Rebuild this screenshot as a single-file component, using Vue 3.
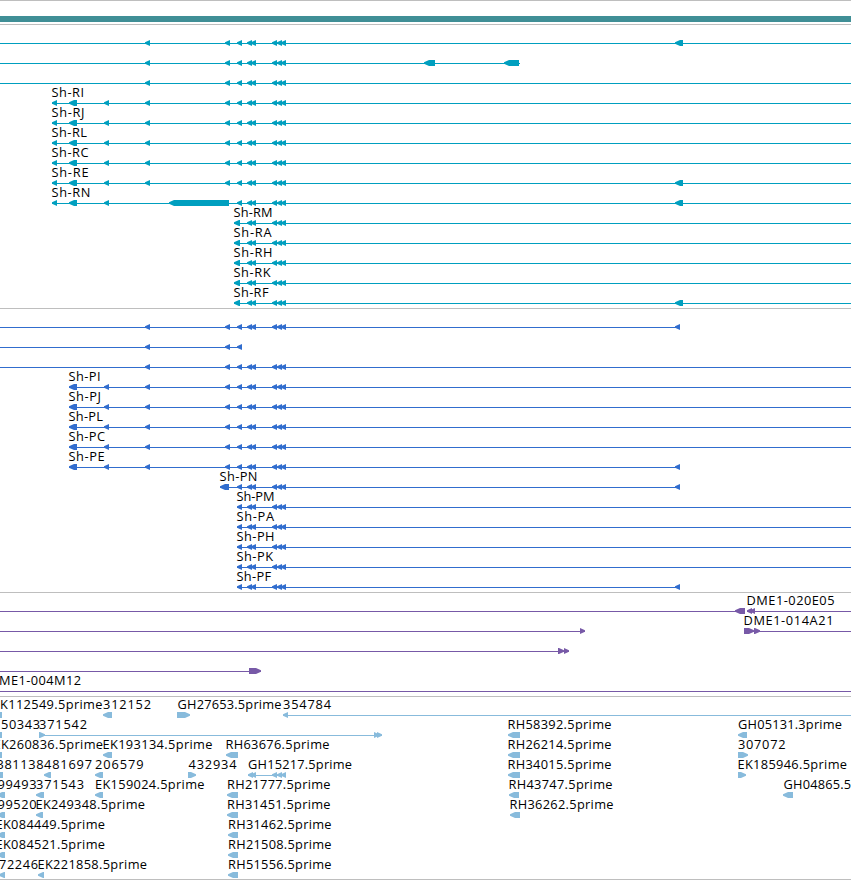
<template>
  <main class="browser">
    <div class="ruler">
      <div class="contig"></div>
    </div>
    <section
      v-for="panel in panels"
      :key="panel.name"
      class="panel"
      :class="panel.name"
    >
      <svg
        v-for="(row, i) in panel.rows"
        :key="i"
        class="row"
        width="851"
        height="20"
        viewBox="0 0 851 20"
      >
        <rect
          v-for="(line, n) in row.lines"
          :key="'l' + n"
          :x="line[0]"
          y="15"
          :width="line[1] - line[0]"
          height="1"
          shape-rendering="crispEdges"
        />
        <polygon
          v-for="(exon, n) in row.exons"
          :key="'e' + n"
          :points="arrow(exon)"
        />
        <text
          v-for="label in row.labels"
          :key="label[0]"
          :x="label[1] + 0.5"
          y="9"
          :textLength="label[2] - 1"
        >{{ label[0] }}</text>
      </svg>
    </section>
  </main>
</template>

<script setup>
const END = 851

// exon positions shared by most transcripts
const tail = [[272, 277], [277, 282], [281, 286]]
const pair = [[247, 252], [251, 256]]
const core = [[237, 242], ...pair, ...tail]
const common = [[145, 150], [225, 230], ...core]

// exon is [start, end], a third value of 1 makes it point to the right
const arrow = ([x1, x2, forward]) => {
  const head = Math.min(5, x2 - x1)
  if (forward) {
    return `${x1},12 ${x2 - head},12 ${x2},14.2 ${x2},15.8 ${x2 - head},18 ${x1},18`
  }
  return `${x2},12 ${x1 + head},12 ${x1},14.2 ${x1},15.8 ${x1 + head},18 ${x2},18`
}

const row = (lines, exons, labels = []) => ({ lines, exons, labels })

const longTranscript = (name, width, extra = []) =>
  row([[52, END]], [[52, 57], [69, 77], [104, 109], ...common, ...extra], [[name, 51, width]])

const shortTranscript = (name, width, extra = []) =>
  row([[234, END]], [[234, 240], ...pair, ...tail, ...extra], [[name, 233, width]])

const longProtein = (name, width, end = END, extra = []) =>
  row([[69, end]], [[69, 77], [104, 109], ...common, ...extra], [[name, 68, width]])

const shortProtein = (name, width, end = END, extra = []) =>
  row([[237, end]], [...core, ...extra], [[name, 236, width]])

const last = [[675, 683]]
const lastCds = [[675, 680]]

const panels = [
  {
    name: 'transcripts',
    rows: [
      row([[0, END]], [...common, ...last]),
      row([[0, 520]], [...common, [424, 435], [504, 519]]),
      row([[0, END]], common),
      longTranscript('Sh-RI', 33.5),
      longTranscript('Sh-RJ', 34),
      longTranscript('Sh-RL', 36.5),
      longTranscript('Sh-RC', 38),
      longTranscript('Sh-RE', 38),
      row(
        [[52, END]],
        [[52, 57], [69, 77], [104, 109], [169, 229], ...core, ...last],
        [['Sh-RN', 51, 40]]
      ),
      ...[['Sh-RM', 40], ['Sh-RA', 39], ['Sh-RH', 40], ['Sh-RK', 38]].map(t => shortTranscript(...t)),
      shortTranscript('Sh-RF', 36, last),
    ],
  },
  {
    name: 'proteins',
    rows: [
      row([[0, 680]], [...common, ...lastCds]),
      row([[0, 242]], [[145, 150], [225, 230], [237, 242]]),
      row([[0, END]], common),
      longProtein('Sh-PI', 33),
      longProtein('Sh-PJ', 33.5),
      longProtein('Sh-PL', 35.5),
      longProtein('Sh-PC', 37.5),
      longProtein('Sh-PE', 37, 680, lastCds),
      row([[220, 680]], [[220, 229], ...core, ...lastCds], [['Sh-PN', 219, 39]]),
      ...[['Sh-PM', 39], ['Sh-PA', 38.5], ['Sh-PH', 39], ['Sh-PK', 37.5]].map(t => shortProtein(...t)),
      shortProtein('Sh-PF', 35.5, 680, lastCds),
    ],
  },
  {
    name: 'clones',
    rows: [
      row([[0, 745], [747, END]], [[735, 745], [747, 752], [750, 755]], [['DME1-020E05', 746, 89]]),
      row([[0, 585], [744, END]], [[580, 585, 1], [744, 754, 1], [754, 760, 1]], [['DME1-014A21', 743, 91]]),
      row([[0, 569]], [[558, 564, 1], [564, 569, 1]]),
      row([[0, 261]], [[249, 261, 1]]),
      row([[0, END]], [], [['ME1-004M12', -1.5, 83]]),
    ],
  },
  {
    name: 'ests',
    rows: [
      row([[283, END]], [[-8, 2], [103, 112], [177, 190, 1], [283, 288]], [
        ['K112549.5prime', -0.5, 103.5],
        ['312152', 102.5, 49],
        ['GH27653.5prime', 177, 105],
        ['354784', 282.5, 49],
      ]),
      row([[39, 382]], [[-8, 2], [39, 45, 1], [374, 379, 1], [377, 382, 1], [508, 520], [738, 747]], [
        ['50343', 0.5, 40],
        ['371542', 38.5, 49],
        ['RH58392.5prime', 507, 105],
        ['GH05131.3prime', 737.5, 105],
      ]),
      row([], [[-8, 2], [103, 112], [226, 238], [508, 520], [738, 748, 1]], [
        ['EK260836.5prime', -7, 110.5],
        ['EK193134.5prime', 102, 111],
        ['RH63676.5prime', 225, 105],
        ['RH26214.5prime', 507, 105],
        ['307072', 737.5, 48.5],
      ]),
      row([[248, 286]], [[-8, 3], [44, 51], [95, 103], [188, 196, 1], [248, 253], [251, 256], ...tail, [508, 520], [738, 746, 1]], [
        ['381138', -4, 48],
        ['481697', 43.5, 49],
        ['206579', 94.5, 49.5],
        ['432934', 188, 49],
        ['GH15217.5prime', 247.5, 105],
        ['RH34015.5prime', 507, 105],
        ['EK185946.5prime', 737, 110.5],
      ]),
      row([], [[-3, 5], [36, 44], [95, 103], [227, 238], [509, 519], [783, 793]], [
        ['99493', -3, 40],
        ['371543', 35.5, 49],
        ['EK159024.5prime', 94.5, 110.5],
        ['RH21777.5prime', 226.5, 104.5],
        ['RH43747.5prime', 508, 105],
        ['GH04865.5prime', 783, 105],
      ]),
      row([], [[-3, 5], [36, 43], [227, 238], [510, 520]], [
        ['99520', -3, 40],
        ['EK249348.5prime', 35, 110.5],
        ['RH31451.5prime', 226.5, 104.5],
        ['RH36262.5prime', 509, 105],
      ]),
      row([], [[-3, 5], [228, 238]], [
        ['EK084449.5prime', -5, 110.5],
        ['RH31462.5prime', 227.5, 104.5],
      ]),
      row([], [[-3, 5], [228, 238]], [
        ['EK084521.5prime', -5, 110.5],
        ['RH21508.5prime', 227.5, 104.5],
      ]),
      row([], [[-1, 5], [38, 44], [228, 238]], [
        ['72246', -1.5, 40],
        ['EK221858.5prime', 37, 110.5],
        ['RH51556.5prime', 227.5, 104.5],
      ]),
    ],
  },
]

// the fifth long transcript also reaches the 5' exon
panels[0].rows[7].exons.push(...last)
</script>

<style>
body {
  background: #fff;
}
</style>

<style scoped>
.browser {
  width: 851px;
  height: 880px;
  overflow: hidden;
}

.ruler {
  box-sizing: border-box;
  height: 25px;
  padding-top: 15px;
  border-top: 1px solid #bebebe;
  border-bottom: 1px solid #bebebe;
}

.contig {
  height: 6px;
  background: #408f96;
}

.panel {
  box-sizing: border-box;
  display: flex;
  flex-direction: column;
  padding-top: 3px;
  border-bottom: 1px solid #bebebe;
}

.row {
  display: block;
  flex: none;
  overflow: visible;
}

.row text {
  fill: #000;
  font-family: "Open Sans", "Noto Sans", sans-serif;
  font-size: 12.8px;
}

.transcripts {
  height: 284px;
  fill: #009fbf;
}

.proteins {
  height: 284px;
  fill: #316dce;
}

.clones {
  height: 104px;
  fill: #7759a7;
}

.ests {
  height: 183px;
  fill: #88bbdc;
}
</style>
